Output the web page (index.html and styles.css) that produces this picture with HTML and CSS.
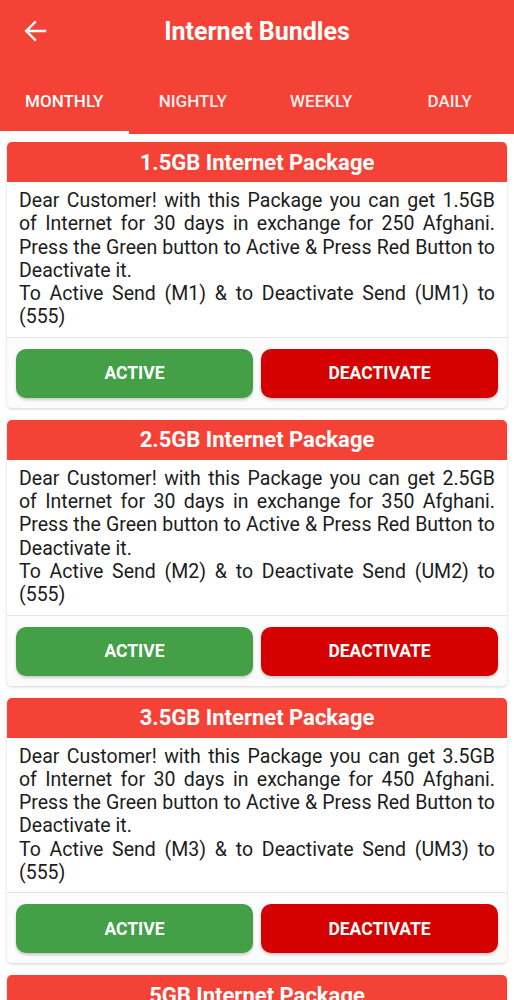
FILE: index.html
```html
<!DOCTYPE html>
<html>
<head>
<meta charset="utf-8">
<link rel="stylesheet" href="styles.css">
</head>
<body>
<div class="appbar">
  <div class="toolbar">
    <svg class="back" viewBox="0 0 24 24" width="30" height="30"><path d="M20 12H5M12 5l-7 7 7 7" fill="none" stroke="#fff" stroke-width="1.9" stroke-linecap="square"/></svg>
    <div class="title">Internet Bundles</div>
  </div>
  <div class="tabs">
    <div class="tab active">MONTHLY</div>
    <div class="tab">NIGHTLY</div>
    <div class="tab">WEEKLY</div>
    <div class="tab">DAILY</div>
  </div>
</div>
<div class="list">
  <div class="card">
    <div class="card-head">1.5GB Internet Package</div>
    <div class="card-body">Dear Customer! with this Package you can get 1.5GB of Internet for 30 days in exchange for 250 Afghani. Press the Green button to Active &amp; Press Red Button to Deactivate it.<br>To Active Send (M1) &amp; to Deactivate Send (UM1) to (555)</div>
    <div class="card-actions"><div class="btn green">ACTIVE</div><div class="btn red">DEACTIVATE</div></div>
  </div>
  <div class="card">
    <div class="card-head">2.5GB Internet Package</div>
    <div class="card-body">Dear Customer! with this Package you can get 2.5GB of Internet for 30 days in exchange for 350 Afghani. Press the Green button to Active &amp; Press Red Button to Deactivate it.<br>To Active Send (M2) &amp; to Deactivate Send (UM2) to (555)</div>
    <div class="card-actions"><div class="btn green">ACTIVE</div><div class="btn red">DEACTIVATE</div></div>
  </div>
  <div class="card">
    <div class="card-head">3.5GB Internet Package</div>
    <div class="card-body">Dear Customer! with this Package you can get 3.5GB of Internet for 30 days in exchange for 450 Afghani. Press the Green button to Active &amp; Press Red Button to Deactivate it.<br>To Active Send (M3) &amp; to Deactivate Send (UM3) to (555)</div>
    <div class="card-actions"><div class="btn green">ACTIVE</div><div class="btn red">DEACTIVATE</div></div>
  </div>
  <div class="card">
    <div class="card-head">5GB Internet Package</div>
    <div class="card-body">Dear Customer! with this Package you can get 5GB of Internet for 30 days in exchange for 550 Afghani. Press the Green button to Active &amp; Press Red Button to Deactivate it.<br>To Active Send (M4) &amp; to Deactivate Send (UM4) to (555)</div>
    <div class="card-actions"><div class="btn green">ACTIVE</div><div class="btn red">DEACTIVATE</div></div>
  </div>
</div>
</body>
</html>
```
FILE: styles.css
```css
html, body {
  margin: 0;
  padding: 0;
  background: #ffffff;
  font-family: Roboto, "Liberation Sans", sans-serif;
  overflow: hidden;
  height: 1000px;
}
.appbar {
  background: #f44336;
  color: #fff;
}
.toolbar {
  height: 64px;
  display: flex;
  align-items: center;
}
.back {
  margin-left: 20px;
  margin-top: -2px;
  flex: none;
}
.title {
  flex: 1;
  text-align: center;
  font-size: 25px;
  font-weight: 700;
  margin-right: 50px;
  margin-top: -2px;
}
.tabs {
  display: flex;
  height: 70px;
}
.tab {
  flex: 1;
  display: flex;
  align-items: center;
  justify-content: center;
  font-size: 17px;
  font-weight: 500;
  padding-top: 7px;
  box-sizing: border-box;
  border-bottom: 3px solid transparent;
  color: #fdeceb;
}
.tab.active {
  border-bottom-color: #ffffff;
  color: #fff;
}
.list {
  padding: 8px 7px 0;
  display: flex;
  flex-direction: column;
  gap: 12px;
}
.card {
  background: #fff;
  border-radius: 5px;
  box-shadow: 0 1px 3px rgba(0,0,0,0.18);
  overflow: hidden;
  flex: none;
}
.card-head {
  background: #f44336;
  color: #fff;
  height: 40px;
  display: flex;
  align-items: center;
  justify-content: center;
  font-size: 22px;
  font-weight: 700;
}
.card-body {
  padding: 7px 12px 8px;
  font-size: 19.5px;
  line-height: 23.3px;
  color: #1c1c1c;
  text-align: justify;
}
.card-actions {
  border-top: 1px solid #e6e6e6;
  background: #fcfcfc;
  display: flex;
  gap: 8px;
  padding: 11px 9px 10px;
}
.btn {
  flex: 1;
  height: 49px;
  border-radius: 10px;
  display: flex;
  align-items: center;
  justify-content: center;
  color: #fff;
  font-size: 17.5px;
  font-weight: 700;
  box-shadow: 0 2px 3px rgba(0,0,0,0.2);
}
.green { background: #43a047; }
.red { background: #d50000; }
```
